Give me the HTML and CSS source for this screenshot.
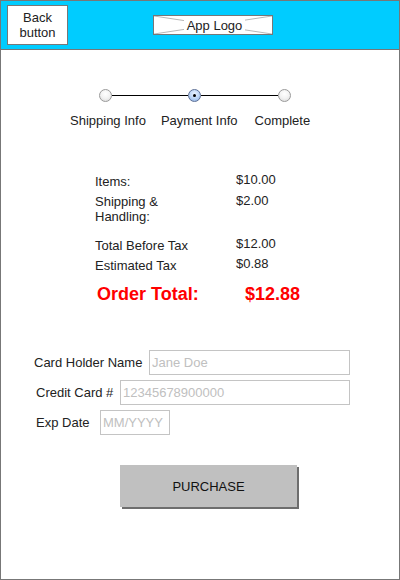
FILE: index.html
```html
<!DOCTYPE html>
<html>
<head>
<meta charset="utf-8">
<link rel="stylesheet" href="styles.css">
</head>
<body>
<div class="frame">
  <header class="topbar">
    <div class="back">Back<br>button</div>
    <div class="logo">
      <svg class="logo-x" width="118" height="18" viewBox="0 0 118 18"><line x1="0" y1="0" x2="118" y2="18"/><line x1="0" y1="18" x2="118" y2="0"/></svg>
      <span class="logo-text">App Logo</span>
    </div>
  </header>

  <div class="steps">
    <span class="dot"></span><span class="track t1"></span><span class="dot on"><span class="pip"></span></span><span class="track t2"></span><span class="dot"></span>
  </div>
  <div class="step-labels">
    <span>Shipping Info</span><span>Payment Info</span><span class="last">Complete</span>
  </div>

  <div class="summary">
    <div class="sum-row"><span class="sum-label">Items:</span><span class="sum-value">$10.00</span></div>
    <div class="sum-row r2"><span class="sum-label">Shipping &amp;<br>Handling:</span><span class="sum-value v2">$2.00</span></div>
    <div class="sum-row r3"><span class="sum-label">Total Before Tax</span><span class="sum-value">$12.00</span></div>
    <div class="sum-row r4"><span class="sum-label">Estimated Tax</span><span class="sum-value">$0.88</span></div>
  </div>
  <div class="total"><span class="total-label">Order Total:</span><span>$12.88</span></div>

  <form class="form">
    <label class="field f1"><span class="lbl l1">Card Holder Name</span><input class="inp w1" placeholder="Jane Doe"></label>
    <label class="field"><span class="lbl l2">Credit Card #</span><input class="inp w2" placeholder="12345678900000"></label>
    <label class="field"><span class="lbl l3">Exp Date</span><input class="inp w3" placeholder="MM/YYYY"></label>
  </form>

  <button class="purchase" type="button">PURCHASE</button>
</div>
</body>
</html>
```
FILE: styles.css
```css
body {
  margin: 0;
  font-family: "Liberation Sans", Arial, sans-serif;
  font-size: 13px;
  color: #222;
}
.frame {
  width: 400px;
  height: 580px;
  box-sizing: border-box;
  border: 1px solid #777;
  background: #fff;
}
.topbar {
  height: 48px;
  background: #00ccff;
  border-bottom: 1px solid #777;
  display: flex;
  align-items: center;
  padding-left: 6px;
}
.back {
  width: 61px;
  height: 40px;
  box-sizing: border-box;
  border: 1px solid #777;
  background: #fff;
  display: flex;
  align-items: center;
  justify-content: center;
  text-align: center;
  line-height: 15px;
}
.logo {
  position: relative;
  margin-left: 85px;
  width: 120px;
  height: 20px;
  box-sizing: border-box;
  border: 1px solid #777;
  background: #fff;
  display: flex;
  align-items: center;
  justify-content: center;
}
.logo-x {
  position: absolute;
  left: 0;
  top: 0;
}
.logo-x line {
  stroke: #b8b8b8;
  stroke-width: 1;
}
.logo-text {
  position: relative;
  background: #fff;
  padding: 0 3px;
  line-height: 15px;
  margin-left: 3px;
}
.steps {
  display: flex;
  align-items: center;
  margin-top: 39px;
  padding-left: 98px;
  height: 13px;
}
.dot {
  width: 13px;
  height: 13px;
  box-sizing: border-box;
  border-radius: 50%;
  border: 1px solid #9a9a9a;
  background: radial-gradient(circle at 50% 35%, #ffffff 0%, #f2f2f2 50%, #d6d6d6 100%);
  display: flex;
  align-items: center;
  justify-content: center;
}
.dot.on {
  border-color: #5c6f96;
  background: radial-gradient(circle at 50% 35%, #eaf3ff 0%, #b9d3f5 55%, #86a9dc 100%);
}
.pip {
  width: 3px;
  height: 3px;
  border-radius: 50%;
  background: #000;
}
.track {
  height: 1px;
  background: #000;
}
.t1 { width: 76px; }
.t2 { width: 77px; }
.step-labels {
  display: flex;
  gap: 15px;
  margin-top: 11px;
  padding-left: 69px;
  line-height: 15px;
}
.step-labels .last { margin-left: 2px; }
.summary {
  margin-top: 46px;
  padding-left: 94px;
  line-height: 15px;
}
.sum-row {
  display: flex;
  align-items: flex-start;
}
.sum-label { width: 141px; }
.sum-value { margin-top: -2px; }
.sum-value.v2 { margin-top: -1px; }
.r2 { margin-top: 5px; }
.r3 { margin-top: 14px; }
.r4 { margin-top: 5px; }
.total {
  display: flex;
  margin-top: 11px;
  padding-left: 96px;
  color: #ff0000;
  font-weight: bold;
  font-size: 18px;
  line-height: 20px;
}
.total-label { width: 148px; }
.form {
  margin: 46px 0 0 0;
  display: flex;
  flex-direction: column;
  gap: 5px;
}
.field {
  display: flex;
  align-items: center;
  gap: 8px;
  height: 25px;
  padding-left: 35px;
}
.field.f1 { padding-left: 33px; }
.lbl { white-space: nowrap; }
.l1 { width: 107px; }
.l2 { width: 76px; }
.l3 { width: 56px; }
.inp {
  box-sizing: border-box;
  height: 25px;
  margin: 0;
  border: 1px solid #c4c4c4;
  padding: 0 2px;
  font-family: "Liberation Sans", Arial, sans-serif;
  font-size: 13px;
  color: #222;
  background: #fff;
  outline: none;
}
.inp::placeholder { color: #c0c0c0; }
.w1 { width: 201px; }
.w2 { width: 230px; }
.w3 { width: 70px; }
.purchase {
  display: block;
  margin: 30px 0 0 119px;
  width: 177px;
  height: 42px;
  border: none;
  background: #c0c0c0;
  box-shadow: 2px 2px 0 #6e6e6e;
  font-family: "Liberation Sans", Arial, sans-serif;
  font-size: 13px;
  color: #111;
  padding: 0;
}
```
